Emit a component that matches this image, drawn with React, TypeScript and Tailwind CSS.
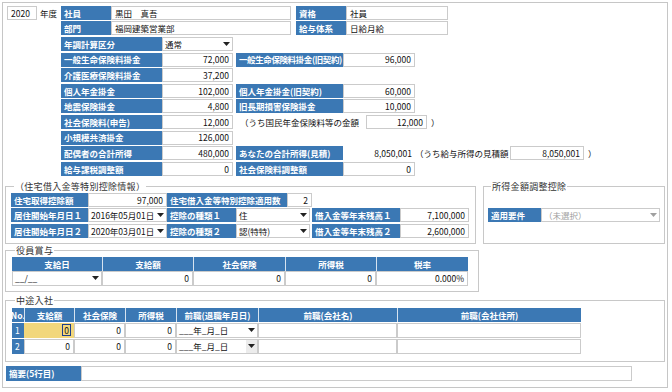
import React from 'react';

type Kids = { className?: string; children?: React.ReactNode };

function Lbl({ className = '', children }: Kids) {
  return (
    <div className={`flex h-full shrink-0 items-center whitespace-nowrap bg-[#3b78b4] pl-[3px] text-[8.5px] font-bold text-white ${className}`}>
      {children}
    </div>
  );
}

function Val({ className = '', children, right = false, bare = false }: Kids & { right?: boolean; bare?: boolean }) {
  return (
    <div
      className={`flex h-full shrink-0 items-center whitespace-nowrap bg-white px-[3px] ${bare ? '' : 'border border-[#cbcbcb]'} ${right ? 'justify-end' : ''} ${className}`}
    >
      {children}
    </div>
  );
}

function Arrow({ muted = false }: { muted?: boolean }) {
  return (
    <svg width="7" height="4" viewBox="0 0 7 4">
      <path d="M0 0h7L3.5 4z" fill={muted ? '#a0a0a0' : '#222'} />
    </svg>
  );
}

function Sel({ className = '', children, muted = false, arrowBg = '' }: Kids & { muted?: boolean; arrowBg?: string }) {
  return (
    <div className={`flex h-full shrink-0 items-center border border-[#cbcbcb] bg-white ${className}`}>
      <span className={`flex-1 whitespace-nowrap pl-[2px] ${muted ? 'text-[#a0a0a0]' : ''}`}>{children}</span>
      <span className={`flex h-full w-[11px] items-center justify-center ${arrowBg}`}>
        <Arrow muted={muted} />
      </span>
    </div>
  );
}

function Box({ title, className = '', children }: Kids & { title: string }) {
  return (
    <fieldset className={`border border-[#c8c8c8] ${className}`}>
      <legend className="ml-[3px] px-[1px] text-[9px] leading-[11px] tracking-[0.3px] text-[#333]">{title}</legend>
      {children}
    </fieldset>
  );
}

// 上段の２列行
function Row({ children }: Kids) {
  return <div className="flex h-[14px] items-center">{children}</div>;
}

const Th = ({ className = '', children }: Kids) => (
  <div className={`flex h-full items-center justify-center border-l border-[#d6e3f0] bg-[#3b78b4] text-[8.5px] font-bold text-white first:border-l-0 ${className}`}>
    {children}
  </div>
);

export default function App() {
  return (
    <div className="h-[392px] w-[672px] overflow-hidden bg-white pl-[2px] pt-[2px] font-['Noto_Sans_CJK_JP',sans-serif] text-[8.5px] leading-none text-[#111]">
      <div className="h-[386px] w-[666px] border border-[#c6c6c6] px-[2px]">
        {/* 年度・基本情報 */}
        <div className="flex pl-[2px] pt-[3px]">
          <div className="flex h-[14px] items-center">
            <Val className="w-[30px]">2020</Val>
            <span className="w-[24px] pl-[3px]">年度</span>
          </div>
          <div className="flex flex-col">
            <Row>
              <Lbl className="w-[50px]">社員</Lbl>
              <Val className="w-[180px]">黒田　真吾</Val>
              <Lbl className="ml-[5px] w-[50px]">資格</Lbl>
              <Val className="w-[102px]">社員</Val>
            </Row>
            <div className="mt-[1px]">
              <Row>
                <Lbl className="w-[50px]">部門</Lbl>
                <Val className="w-[180px]">福岡建築営業部</Val>
                <Lbl className="ml-[5px] w-[50px]">給与体系</Lbl>
                <Val className="w-[102px]">日給月給</Val>
              </Row>
            </div>
            <div className="mt-[2px] flex flex-col gap-[1.6px]">
              <Row>
                <Lbl className="w-[101px]">年調計算区分</Lbl>
                <Sel className="w-[71px]">通常</Sel>
              </Row>
              <Row>
                <Lbl className="w-[101px]">一般生命保険料掛金</Lbl>
                <Val right className="w-[71px]">72,000</Val>
                <Lbl className="ml-[3px] w-[107px] tracking-[-0.4px]">一般生命保険料掛金(旧契約)</Lbl>
                <Val right className="w-[72px]">96,000</Val>
              </Row>
              <Row>
                <Lbl className="w-[101px]">介護医療保険料掛金</Lbl>
                <Val right className="w-[71px]">37,200</Val>
              </Row>
              <Row>
                <Lbl className="w-[101px]">個人年金掛金</Lbl>
                <Val right className="w-[71px]">102,000</Val>
                <Lbl className="ml-[3px] w-[107px]">個人年金掛金(旧契約)</Lbl>
                <Val right className="w-[72px]">60,000</Val>
              </Row>
              <Row>
                <Lbl className="w-[101px]">地震保険掛金</Lbl>
                <Val right className="w-[71px]">4,800</Val>
                <Lbl className="ml-[3px] w-[107px]">旧長期損害保険掛金</Lbl>
                <Val right className="w-[72px]">10,000</Val>
              </Row>
              <Row>
                <Lbl className="w-[101px]">社会保険料(申告)</Lbl>
                <Val right className="w-[71px]">12,000</Val>
                <span className="ml-[7px] w-[126px] whitespace-nowrap">（うち国民年金保険料等の金額</span>
                <Val right className="w-[61px]">12,000</Val>
                <span className="ml-[4px]">）</span>
              </Row>
              <Row>
                <Lbl className="w-[101px]">小規模共済掛金</Lbl>
                <Val right className="w-[71px]">126,000</Val>
              </Row>
              <Row>
                <Lbl className="w-[101px]">配偶者の合計所得</Lbl>
                <Val right className="w-[71px]">480,000</Val>
                <Lbl className="ml-[3px] w-[107px]">あなたの合計所得(見積)</Lbl>
                <Val right bare className="w-[72px]">8,050,001</Val>
                <span className="w-[95px] whitespace-nowrap">（うち給与所得の見積額</span>
                <Val right className="w-[74px]">8,050,001</Val>
                <span className="ml-[4px]">）</span>
              </Row>
              <Row>
                <Lbl className="w-[101px]">給与課税調整額</Lbl>
                <Val right className="w-[71px]">0</Val>
                <Lbl className="ml-[3px] w-[107px]">社会保険料調整額</Lbl>
                <Val right className="w-[72px]">0</Val>
              </Row>
            </div>
          </div>
        </div>

        {/* 住宅借入金・所得金額調整 */}
        <div className="mt-[5px] flex">
          <Box title="（住宅借入金等特別控除情報）" className="w-[471px] px-[5px] pb-[5px] pt-[1px]">
            <div className="flex flex-col gap-[1.5px]">
              <Row>
                <Lbl className="w-[77px]">住宅取得控除額</Lbl>
                <Val right className="w-[79px]">97,000</Val>
                <Lbl className="w-[120px]">住宅借入金等特別控除適用数</Lbl>
                <Val right className="w-[25px]">2</Val>
              </Row>
              <Row>
                <Lbl className="w-[77px]">居住開始年月日１</Lbl>
                <Sel className="w-[79px]">2016年05月01日</Sel>
                <Lbl className="w-[69px]">控除の種類１</Lbl>
                <Sel className="w-[74px]">住</Sel>
                <Lbl className="ml-[2px] w-[88px]">借入金等年末残高１</Lbl>
                <Val right className="w-[69px]">7,100,000</Val>
              </Row>
              <Row>
                <Lbl className="w-[77px]">居住開始年月日２</Lbl>
                <Sel className="w-[79px]">2020年03月01日</Sel>
                <Lbl className="w-[69px]">控除の種類２</Lbl>
                <Sel className="w-[74px]">認(特特)</Sel>
                <Lbl className="ml-[2px] w-[88px]">借入金等年末残高２</Lbl>
                <Val right className="w-[69px]">2,600,000</Val>
              </Row>
            </div>
          </Box>
          <Box title="所得金額調整控除" className="ml-[7px] w-[182px] px-[4px] pb-[5px] pt-[1px]">
            <div className="flex flex-col gap-[1.5px]">
              <div className="h-[14px]" />
              <Row>
                <Lbl className="w-[53px]">適用要件</Lbl>
                <Sel muted className="flex-1">（未選択）</Sel>
              </Row>
              <div className="h-[14px]" />
            </div>
          </Box>
        </div>

        {/* 役員賞与 */}
        <Box title="役員賞与" className="mt-[1px] w-[474px] px-[6px] pb-[5px] pt-[1px]">
          <div className="grid h-[14px] grid-cols-[90px_91px_92px_91px_92px]">
            <Th>支給日</Th>
            <Th>支給額</Th>
            <Th>社会保険</Th>
            <Th>所得税</Th>
            <Th>税率</Th>
          </div>
          <div className="grid h-[15px] grid-cols-[90px_91px_92px_91px_92px]">
            <Sel>__/__</Sel>
            <Val right>0</Val>
            <Val right>0</Val>
            <Val right>0</Val>
            <Val right>0.000%</Val>
          </div>
        </Box>

        {/* 中途入社 */}
        <Box title="中途入社" className="mt-[3px] w-[660px] px-[6px] pb-[7px] pt-[2px]">
          <div className="grid h-[14px] grid-cols-[12px_50px_51px_51px_82px_139px_184px]">
            <Th className="text-[7px]">No.</Th>
            <Th>支給額</Th>
            <Th>社会保険</Th>
            <Th>所得税</Th>
            <Th>前職(退職年月日)</Th>
            <Th>前職(会社名)</Th>
            <Th>前職(会社住所)</Th>
          </div>
          {[1, 2].map((n) => (
            <div key={n} className="mt-[1px] grid h-[15px] grid-cols-[12px_50px_51px_51px_82px_139px_184px]">
              <div className="flex items-center bg-[#3b78b4] pl-[3px] text-white">{n}</div>
              {n === 1 ? (
                <div className="flex items-center justify-end bg-[#f2d77c] pr-[3px]">
                  <span className="border border-[#1d3f8c] px-[1px] leading-[10px]">0</span>
                </div>
              ) : (
                <Val right>0</Val>
              )}
              <Val right>0</Val>
              <Val right>0</Val>
              <Sel arrowBg={n === 2 ? 'bg-[#ececec]' : ''}>___年_月_日</Sel>
              <Val />
              <Val />
            </div>
          ))}
        </Box>

        {/* 摘要 */}
        <div className="ml-[1px] mt-[4px] flex h-[15px]">
          <Lbl className="w-[75px]">摘要(5行目)</Lbl>
          <Val className="w-[551px]" />
        </div>
      </div>
    </div>
  );
}
